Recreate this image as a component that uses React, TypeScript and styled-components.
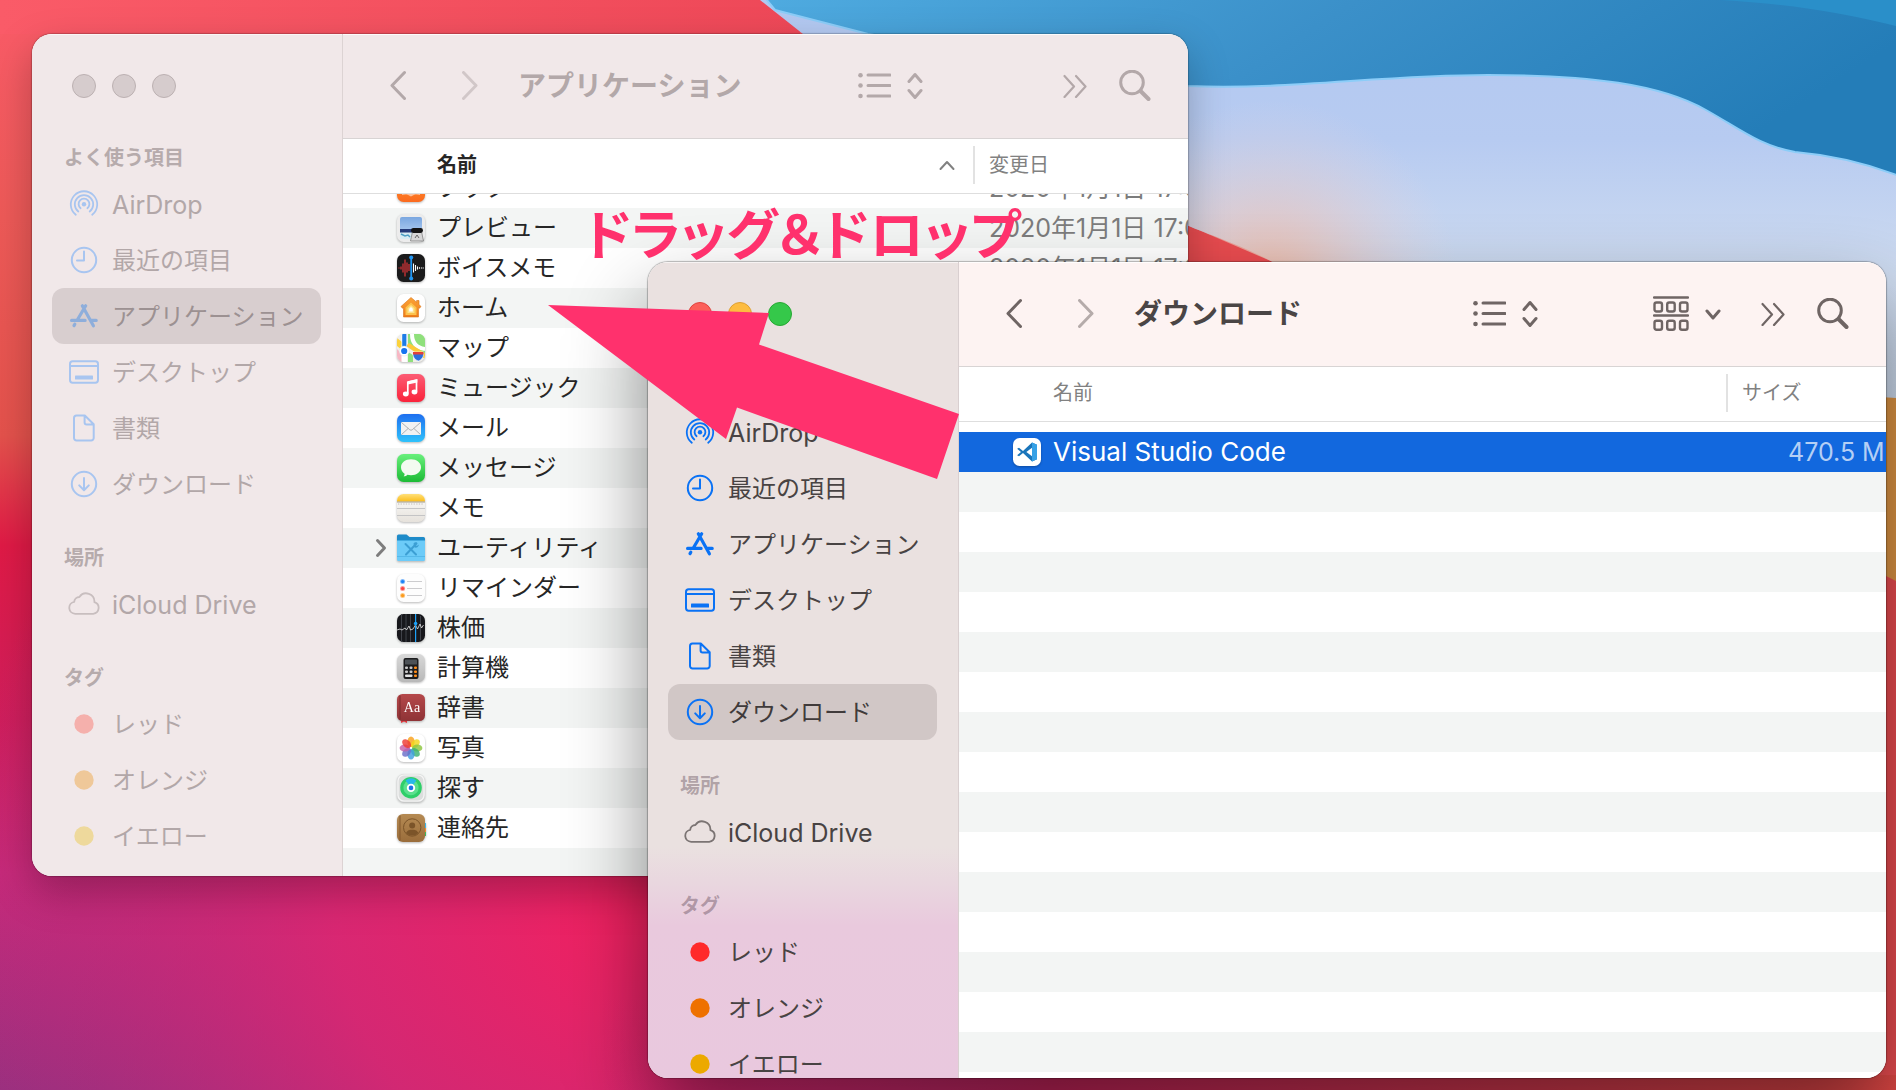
import React from "react";
import styled, { createGlobalStyle, css } from "styled-components";

const Global = createGlobalStyle`
  *, *::before, *::after { box-sizing: border-box; }
  html, body { margin: 0; padding: 0; }
  body {
    font-family: Inter, "Noto Sans CJK JP", sans-serif;
    font-size: 24px;
    line-height: 40px;
    background: #d81b60;
  }
  button {
    font: inherit;
    color: inherit;
    background: none;
    border: 0;
    padding: 0;
    margin: 0;
    cursor: pointer;
    display: block;
  }
  svg { display: block; }
`;

/* ---------- desktop ---------- */

const Desktop = styled.main`
  position: relative;
  height: 100vh;
  min-height: 900px;
  overflow: hidden;
`;

const WallpaperSvg = styled.svg`
  position: absolute;
  inset: 0;
  width: 100%;
  height: 100%;
`;

const windowBase = css`
  position: absolute;
  display: flex;
  overflow: hidden;
  border-radius: 20px;
  background: #ffffff;
`;

const BackWindow = styled.section`
  ${windowBase}
  left: 32px;
  top: 34px;
  width: 1156px;
  height: 842px;
  box-shadow: 0 0 1px 1px rgba(0, 0, 0, 0.2), 0 16px 40px rgba(0, 0, 0, 0.26);
`;

const FrontWindow = styled.section`
  ${windowBase}
  left: 648px;
  top: 262px;
  right: 10px;
  bottom: 12px;
  box-shadow: 0 0 1px 1px rgba(0, 0, 0, 0.26), 0 40px 80px rgba(0, 0, 0, 0.46);
`;

/* ---------- sidebar ---------- */

const Sidebar = styled.aside<{ $active: boolean }>`
  flex: 0 0 311px;
  overflow: hidden;
  padding-top: 40px;
  border-right: 1px solid ${(p) => (p.$active ? "#d9cfd0" : "#dcd3d3")};
  box-shadow: inset 0 1px 0 rgba(255, 255, 255, 0.6);
  color: ${(p) => (p.$active ? "#484343" : "#b2a7a8")};
  background: ${(p) =>
    p.$active
      ? "linear-gradient(180deg, #eae1e0 0, #eae1e0 584px, #e9d7df 620px, #e9c9dd 664px, #e9c8de 100%)"
      : "#f1e8e9"};
`;

const Lights = styled.div`
  display: flex;
  gap: 16px;
  padding-left: 40px;
  margin-bottom: 48px;
`;

const Light = styled.button<{ $fill: string; $edge: string }>`
  width: 24px;
  height: 24px;
  border-radius: 50%;
  background: ${(p) => p.$fill};
  border: 1px solid ${(p) => p.$edge};
`;

const Group = styled.nav`
  & + & { margin-top: 34px; }
`;

const GroupTitle = styled.h2<{ $active: boolean }>`
  margin: 0 0 6px;
  padding-left: 32px;
  font-size: 20px;
  line-height: 24px;
  font-weight: 700;
  color: ${(p) => (p.$active ? "rgba(70, 45, 60, 0.36)" : "#b6abac")};
`;

const Items = styled.ul`
  list-style: none;
  margin: 0;
  padding: 0 21px 0 20px;
`;

const Item = styled.button<{ $selected?: boolean; $active: boolean }>`
  display: flex;
  align-items: center;
  gap: 12px;
  width: 100%;
  height: 56px;
  padding-left: 16px;
  border-radius: 12px;
  text-align: left;
  white-space: nowrap;
  ${(p) =>
    p.$selected &&
    css`
      background: ${p.$active ? "#d1c7c6" : "#d8cecf"};
      color: ${p.$active ? "#403b3b" : "#9c9192"};
    `}
`;

const ItemLabel = styled.span<{ $latin?: boolean }>`
  padding-top: 2px;
  font-size: ${(p) => (p.$latin ? 25 : 24)}px;
  line-height: 40px;
`;

const ItemIcon = styled.span<{ $color: string }>`
  width: 32px;
  height: 32px;
  color: ${(p) => p.$color};
`;

/* ---------- content pane ---------- */

const Pane = styled.div`
  flex: 1;
  min-width: 0;
  display: flex;
  flex-direction: column;
`;

const Toolbar = styled.header<{ $active: boolean }>`
  flex: none;
  display: flex;
  align-items: center;
  height: 105px;
  padding: 0 37px 0 47px;
  border-bottom: 1px solid #d8d4d4;
  box-shadow: inset 0 1px 0 rgba(255, 255, 255, 0.8);
  background: ${(p) => (p.$active ? "#fdf3f2" : "#f1e8e9")};
  color: ${(p) => (p.$active ? "#6f6564" : "#b3a8a9")};
`;

const Title = styled.h1<{ $active: boolean }>`
  flex: 1;
  margin: 0;
  font-size: 28px;
  line-height: 40px;
  font-weight: 700;
  white-space: nowrap;
  color: ${(p) => (p.$active ? "#4a4545" : "#b3a8a9")};
`;

const Tool = styled.button<{ $before?: number; $faded?: boolean }>`
  flex: none;
  display: flex;
  align-items: center;
  gap: 16px;
  margin-left: ${(p) => p.$before ?? 0}px;
  opacity: ${(p) => (p.$faded ? 0.5 : 1)};
`;

const NavTools = styled.div`
  display: flex;
  gap: 56px;
  margin-right: 40px;
`;

const Table = styled.table<{ $side: number }>`
  flex: 1;
  min-height: 0;
  display: flex;
  flex-direction: column;
  tr {
    display: grid;
    grid-template-columns: minmax(0, 1fr) ${(p) => p.$side}px;
  }
`;

const Head = styled.thead`
  flex: none;
  display: block;
  border-bottom: 1px solid #dedede;
  background: #ffffff;
`;

const HeadCell = styled.th<{ $strong?: boolean }>`
  display: flex;
  align-items: center;
  justify-content: space-between;
  height: 38px;
  margin: 7px 0 9px;
  padding: 0 18px 0 94px;
  font-size: 20px;
  line-height: 36px;
  text-align: left;
  white-space: nowrap;
  font-weight: ${(p) => (p.$strong ? 700 : 400)};
  color: ${(p) => (p.$strong ? "#262626" : "#818181")};
  svg { color: #818181; }
  & + & {
    border-left: 2px solid #e2e2e2;
    padding-left: 14px;
  }
`;

const Body = styled.tbody<{ $shift: number }>`
  display: block;
  flex: 1;
  min-height: 0;
  overflow: hidden;
  background:
    linear-gradient(#ffffff, #ffffff) 0 0 / 100% 10px no-repeat,
    linear-gradient(#ffffff 50%, #f3f5f4 50%) 0 ${(p) => p.$shift}px / 100% 80px;
  & > tr:first-child { margin-top: ${(p) => p.$shift}px; }
`;

const Row = styled.tr<{ $selected?: boolean }>`
  height: 40px;
  color: ${(p) => (p.$selected ? "#ffffff" : "#262626")};
  background: ${(p) => (p.$selected ? "#1268de" : "transparent")};
`;

const NameCell = styled.td<{ $latin?: boolean }>`
  display: flex;
  align-items: center;
  height: 40px;
  padding: 0;
  font-size: ${(p) => (p.$latin ? 26 : 24)}px;
  white-space: nowrap;
`;

const Slot = styled.span`
  flex: 0 0 54px;
  display: flex;
  justify-content: flex-end;
  padding-right: 10px;
  color: #7d7d7d;
`;

const AppIcon = styled.span`
  flex: none;
  width: 28px;
  height: 28px;
  margin-right: 12px;
  filter: drop-shadow(0 1px 1px rgba(0, 0, 0, 0.28));
  svg { overflow: visible; }
`;

const SideCell = styled.td<{ $inset: number; $selected?: boolean }>`
  height: 40px;
  padding: 0 0 0 ${(p) => p.$inset}px;
  overflow: hidden;
  font-size: 25px;
  white-space: nowrap;
  color: ${(p) => (p.$selected ? "#b4cff5" : "#7c7c7c")};
`;

/* ---------- annotation ---------- */

const Caption = styled.p`
  position: absolute;
  left: 584px;
  top: 200px;
  margin: 0;
  font-family: "Noto Sans CJK JP", sans-serif;
  font-feature-settings: "palt";
  font-size: 54px;
  line-height: 64px;
  font-weight: 700;
  white-space: nowrap;
  color: #ff316d;
`;

const Arrow = styled.svg`
  position: absolute;
  left: 548px;
  top: 305px;
`;

/* ---------- small line icons ---------- */

const Glyph = ({ w, h, sw = 3, children }: { w: number; h: number; sw?: number; children: React.ReactNode }) => (
  <svg width={w} height={h} viewBox={`0 0 ${w} ${h}`} fill="none" stroke="currentColor" strokeWidth={sw} strokeLinecap="round" strokeLinejoin="round" aria-hidden="true">
    {children}
  </svg>
);

const BackGlyph = () => <Glyph w={16} h={32}><path d="M14.5 2.500 2 15.500l12.500 13" /></Glyph>;
const ForwardGlyph = () => <Glyph w={16} h={32}><path d="M1.500 2.500 14 15.500 1.500 28.500" /></Glyph>;
const ListGlyph = () => (
  <Glyph w={33} h={26}>
    <path d="M10 2h22M10 12.500h22M10 23h22" />
    <g fill="currentColor" stroke="none"><circle cx="2.500" cy="2.300" r="2.300" /><circle cx="2.500" cy="12.500" r="2.300" /><circle cx="2.500" cy="23" r="2.300" /></g>
  </Glyph>
);
const UpDownGlyph = () => <Glyph w={16} h={28}><path d="M2 9.500 8 2.500l6 7M2 18.500l6 7 6-7" /></Glyph>;
const GroupGlyph = () => (
  <Glyph w={36} h={36} sw={2.4}>
    <path d="M1 1.500h34M1 19.500h34" />
    <rect x="1.500" y="6.500" width="7.500" height="9" rx="2" /><rect x="14.200" y="6.500" width="7.500" height="9" rx="2" /><rect x="27" y="6.500" width="7.500" height="9" rx="2" />
    <rect x="1.500" y="24.800" width="7.500" height="9" rx="2" /><rect x="14.200" y="24.800" width="7.500" height="9" rx="2" /><rect x="27" y="24.800" width="7.500" height="9" rx="2" />
  </Glyph>
);
const DownGlyph = () => <Glyph w={16} h={14}><path d="M2 4l6 7 6-7" /></Glyph>;
const MoreGlyph = () => <Glyph w={24} h={24} sw={2.2}><path d="M1.500 2 11 12.500 1.500 23M13 2l9.500 10.500L13 23" /></Glyph>;
const SearchGlyph = () => <Glyph w={32} h={32}><circle cx="13" cy="12.500" r="11.300" strokeWidth="3" /><path d="M21.500 21 29.500 29" strokeWidth="4" /></Glyph>;
const SortGlyph = () => <Glyph w={16} h={12} sw={2}><path d="M1.500 10 8 3l6.500 7" /></Glyph>;
const DiscloseGlyph = () => <Glyph w={12} h={20}><path d="M2.500 2.500l7 7.500-7 7.500" /></Glyph>;

const SideGlyph = ({ sw = 2, children }: { sw?: number; children: React.ReactNode }) => <Glyph w={32} h={32} sw={sw}>{children}</Glyph>;

const AirDropGlyph = () => (
  <SideGlyph sw={1.8}>
    <path d="M7.800 26.800a13.200 13.200 0 1 1 16.400 0M10.300 23.500a9.200 9.200 0 1 1 11.400 0M12.600 20.200a5.400 5.400 0 1 1 6.800 0" />
    <circle cx="16" cy="16.200" r="2.200" fill="currentColor" stroke="none" />
  </SideGlyph>
);
const ClockGlyph = () => <SideGlyph><circle cx="16" cy="16" r="12.200" /><path d="M16 7.500v9H9" /></SideGlyph>;
const AppsGlyph = () => <SideGlyph sw={3.2}><path d="M14.300 5.800 25.400 25.800M17.700 5.800 9.300 20M3.600 20.400h13.500M22.600 20.400h5.600M6.800 24.200l-.8 1.400" /></SideGlyph>;
const DesktopGlyph = () => <SideGlyph><rect x="2" y="5.300" width="28" height="21.400" rx="2.600" /><path d="M2 10h28" /><rect x="7" y="19.600" width="18" height="4" rx=".6" fill="currentColor" stroke="none" /></SideGlyph>;
const DocGlyph = () => <SideGlyph><path d="M8.500 3.500h8.300l8.900 8.700v13.800a2.500 2.500 0 0 1-2.500 2.500H8.500A2.500 2.500 0 0 1 6 26V6a2.500 2.500 0 0 1 2.500-2.500ZM16.600 3.800v6.600a2 2 0 0 0 2 2h6.800" /></SideGlyph>;
const DownloadGlyph = () => <SideGlyph><circle cx="16" cy="16" r="12.200" /><path d="M16 10v12M11.200 17.400 16 22.200l4.800-4.800" /></SideGlyph>;
const CloudGlyph = () => <SideGlyph sw={1.8}><path d="M7.200 25.800a6 6 0 0 1-1-11.900 5.300 5.300 0 0 1 5.200-4.900 8.200 8.200 0 0 1 15 5.100 6 6 0 0 1-1.200 11.700Z" /></SideGlyph>;
const TagDot = () => <SideGlyph><circle cx="16" cy="16" r="9.700" fill="currentColor" stroke="none" /></SideGlyph>;

/* ---------- application icons ---------- */

const Art = ({ children }: { children: React.ReactNode }) => <svg width="28" height="28" viewBox="0 0 28 28" aria-hidden="true">{children}</svg>;
const Tile = ({ fill }: { fill: string }) => <rect width="28" height="28" rx="6.500" fill={fill} />;

const DefsSvg = styled.svg`
  position: absolute;
`;

const ArtDefs = () => (
  <DefsSvg width="0" height="0" aria-hidden="true">
    <defs>
      <linearGradient id="gBooks" x2="0" y2="1"><stop stopColor="#ff9a2e" /><stop offset="1" stopColor="#fb6a1f" /></linearGradient>
      <linearGradient id="gSky" x2="0" y2="1"><stop stopColor="#7aa7e0" /><stop offset="1" stopColor="#b9d4f4" /></linearGradient>
      <linearGradient id="gMusic" x2="0" y2="1"><stop stopColor="#fc5c74" /><stop offset="1" stopColor="#fa233b" /></linearGradient>
      <linearGradient id="gMail" x2="0" y2="1"><stop stopColor="#1f6ff0" /><stop offset="1" stopColor="#2fc2fb" /></linearGradient>
      <linearGradient id="gMsg" x2="0" y2="1"><stop stopColor="#68f07c" /><stop offset="1" stopColor="#1cbb35" /></linearGradient>
      <linearGradient id="gPaper" x2="0" y2="1"><stop stopColor="#fdfdfc" /><stop offset="1" stopColor="#e6e2dc" /></linearGradient>
      <linearGradient id="gNote" x2="0" y2="1"><stop stopColor="#ffe07a" /><stop offset="1" stopColor="#fbbd1b" /></linearGradient>
      <linearGradient id="gHome" x2="0" y2="1"><stop stopColor="#fba337" /><stop offset="1" stopColor="#ef7d18" /></linearGradient>
      <linearGradient id="gCalc" x2="0" y2="1"><stop stopColor="#d9d9d9" /><stop offset="1" stopColor="#b8b8b8" /></linearGradient>
      <linearGradient id="gDict" x2="0" y2="1"><stop stopColor="#b5484a" /><stop offset="1" stopColor="#8e3336" /></linearGradient>
      <linearGradient id="gCont" x2="0" y2="1"><stop stopColor="#b58a53" /><stop offset="1" stopColor="#9a6d3b" /></linearGradient>
      <clipPath id="tileClip"><rect width="28" height="28" rx="6.500" /></clipPath>
    </defs>
  </DefsSvg>
);

const BooksArt = () => <Art><Tile fill="url(#gBooks)" /><path d="M5 9c3-1 6-1 9 1.500C17 8 20 8 23 9v12c-3-1-6-.8-9 1.500C11 20.200 8 20 5 21Z" fill="#fff" opacity=".55" /></Art>;
const PreviewArt = () => (
  <Art>
    <Tile fill="#ececec" />
    <rect x="3" y="3" width="22" height="20" rx="2" fill="url(#gSky)" />
    <path d="M3 15h22v4H3Z" fill="#243a78" /><path d="M3 18.500h22V23a2 2 0 0 1-2 2H5a2 2 0 0 1-2-2Z" fill="#d8ecf3" />
    <path d="m4 20 4 2 3-1 2 2" stroke="#4f9fc4" strokeWidth="1.500" fill="none" />
    <path d="M15.500 17.500h9l2 9.500H13.500Z" fill="#d6d6d6" stroke="#777" strokeWidth=".7" />
    <rect x="14" y="14" width="12" height="5" rx="2.400" fill="#141414" /><path d="m18 24 2-3 2 3" stroke="#666" fill="none" />
  </Art>
);
const VoiceArt = () => (
  <Art>
    <Tile fill="#1b1b1c" />
    <path d="M2 13.500v1M4 12.500v3M6 9.500v9M8 5.500v17M10 8.500v10M12 10v7" stroke="#f0383c" strokeWidth="1.100" />
    <path d="M16.500 9.500v9M18.500 11v6M20.500 12.500v3M22.500 13.300v1.400M24.500 13.500v1M26.200 13.500v1" stroke="#fff" strokeWidth="1.100" />
    <path d="M14.200 3v22" stroke="#2196f3" strokeWidth="1.800" /><circle cx="14.200" cy="3.600" r="2" fill="#2196f3" /><circle cx="14.200" cy="24.400" r="2" fill="#2196f3" />
  </Art>
);
const HomeArt = () => (
  <Art>
    <Tile fill="#fff" />
    <path d="M14 3.500 4 12.500l1.500 1.800L6.500 13.500V23h15V13.500l1 .8 1.500-1.800-2-1.900V6.500h-2.400v1.700Z" fill="url(#gHome)" stroke="#d8741a" strokeWidth=".6" />
    <path d="m14 8.500-5.500 5V21h11v-7.500Z" fill="#fcc24d" /><path d="m14 11-3.500 3.200V19h7v-4.800Z" fill="#fde28a" /><path d="m14 13-1.800 1.800v2.700h3.600v-2.700Z" fill="#fff" />
  </Art>
);
const MapsArt = () => (
  <Art>
    <g clipPath="url(#tileClip)">
      <rect width="28" height="28" fill="#f1efe9" />
      <path d="M11 0h17v20L11 12Z" fill="#8fe07c" /><path d="M0 15l5 5v8H0Z" fill="#f7b7c4" /><path d="M0 4l5 4v8l-5-4Z" fill="#fbd23c" />
      <path d="M15 0c0 9 5 14 13 15" stroke="#fff" strokeWidth="4" fill="none" /><path d="M21 0c0 5 3 8 7 9V0Z" fill="#8fe07c" />
      <path d="m9 12 19 13v-6L12 9Z" fill="#fcc93a" />
      <path d="M4.500 0h5.500v28H4.500Z" fill="#fff" /><path d="M5.200 0h4.200v15H5.200Z" fill="#1e7ce6" /><path d="M11 18v10h5V21Z" fill="#8fe07c" />
      <path d="M16 18h10.500c.5 5-1.500 7.500-5.200 9-3.800-1.500-5.800-4-5.300-9Z" fill="#2c6fdc" stroke="#fff" strokeWidth=".6" /><path d="M16 18h10.500v2.600H16Z" fill="#e2403a" />
    </g>
    <circle cx="7.200" cy="17" r="5" fill="#fff" stroke="#cfd6e0" strokeWidth=".4" /><circle cx="7.200" cy="17" r="3.100" fill="#1674f0" />
  </Art>
);
const MusicArt = () => (
  <Art>
    <Tile fill="url(#gMusic)" />
    <path d="M10.800 19.500V8.200l8.700-2v11.200" fill="none" stroke="#fff" strokeWidth="1.700" /><path d="M10.800 7.200 20.300 5v3.500l-9.500 2.100Z" fill="#fff" />
    <ellipse cx="8.800" cy="20" rx="2.900" ry="2.400" fill="#fff" /><ellipse cx="17.500" cy="18" rx="2.900" ry="2.400" fill="#fff" />
  </Art>
);
const MailArt = () => (
  <Art>
    <Tile fill="url(#gMail)" /><rect x="4" y="8" width="20" height="13" rx="1.200" fill="#f2f2f2" />
    <path d="m4.500 8.500 8.300 7.300a2 2 0 0 0 2.400 0l8.300-7.300M4.500 20.600l6.700-6.200M23.500 20.600l-6.700-6.200" fill="none" stroke="#a4a8ac" strokeWidth=".9" />
  </Art>
);
const MessagesArt = () => <Art><Tile fill="url(#gMsg)" /><path d="M14 5.300c5.600 0 10 3.500 10 8s-4.400 8-10 8c-1.300 0-2.500-.2-3.600-.5-1 1-2.200 1.500-3.800 1.500.7-.8 1-1.500 1-2.600C5.400 18.200 4 16 4 13.300c0-4.500 4.400-8 10-8Z" fill="#f3fbf1" /></Art>;
const NotesArt = () => (
  <Art>
    <Tile fill="url(#gPaper)" /><g clipPath="url(#tileClip)"><rect width="28" height="7.500" fill="url(#gNote)" /></g>
    <path d="M0 8h28" stroke="#8a8474" strokeWidth=".8" /><path d="M1 10h26" stroke="#bcb8b0" strokeWidth=".9" strokeDasharray="1.300 1.300" /><path d="M0 14.500h28M0 21.500h28" stroke="#c0c0c2" strokeWidth=".9" />
  </Art>
);
const FolderArt = () => (
  <Art>
    <path d="M0 2a1.500 1.500 0 0 1 1.500-1.500h8L12.500 3h14A1.500 1.500 0 0 1 28 4.500V25H0Z" fill="#1d8bc9" />
    <path d="M0 6.500h28v19a1.500 1.500 0 0 1-1.500 1.500h-25A1.500 1.500 0 0 1 0 25.500Z" fill="#6ccbf8" /><path d="M0 22.500h28" stroke="#4fb2e4" strokeWidth=".8" />
    <path d="m8.500 10 10.500 10.500M19.500 9.500 9 20.500" stroke="#3c9fd4" strokeWidth="2" strokeLinecap="round" /><path d="M16.500 9.500a3 3 0 0 1 3.500-1l-1.800 2 1.600 1.600 2-1.600a3 3 0 0 1-4.500 2.800" fill="#3c9fd4" />
  </Art>
);
const RemindersArt = () => (
  <Art>
    <Tile fill="#fdfdfd" />
    <path d="M10 7.500h15M10 14.500h15M10 21.500h15" stroke="#c6c6c8" strokeWidth=".9" />
    {([[7.500, "#1a82f7"], [14.500, "#fb4340"], [21.500, "#fb9a1c"]] as [number, string][]).map(([y, c]) => (
      <g key={c}><circle cx="5.600" cy={y} r="2.500" fill={c} opacity=".55" /><circle cx="5.600" cy={y} r="1.600" fill={c} /></g>
    ))}
  </Art>
);
const StocksArt = () => (
  <Art>
    <Tile fill="#17181c" /><path d="M4.500 0v28M9 0v28M13.500 0v28M23.500 2v24" stroke="#44474f" strokeWidth=".9" />
    <path d="M0 16l3-1 2 1 3-2 1.500 2L12 12l1.500 4 2.500-1 2.500-4 2 4 2.500-5 1.500 4 2-3" fill="none" stroke="#e8e8e8" strokeWidth=".8" />
    <path d="M18.600 0v28" stroke="#1da1f7" strokeWidth="1.200" /><circle cx="18.600" cy="9.500" r="1.800" fill="#1da1f7" />
  </Art>
);
const CalcArt = () => (
  <Art>
    <Tile fill="url(#gCalc)" /><rect x="6.500" y="4" width="15" height="21" rx="2" fill="#1c1c1e" /><rect x="8" y="5.500" width="12" height="5" rx=".6" fill="#4d5257" />
    {[12.500, 16.500].map((y) => <g key={y}><rect x="8" y={y} width="3" height="2.600" rx="1" fill="#c9c9c9" /><rect x="12.500" y={y} width="3" height="2.600" rx="1" fill="#c9c9c9" /><rect x="17" y={y} width="3" height="2.600" rx="1" fill="#ff8d1a" /></g>)}
    <rect x="8" y="20.500" width="7.500" height="2.600" rx="1" fill="#e2e2e2" /><rect x="17" y="20.500" width="3" height="2.600" rx="1" fill="#ff8d1a" />
  </Art>
);
const DictArt = () => (
  <Art>
    <path d="M4 25h6v4l-3-1.500L4 29Z" fill="#e2343a" /><rect width="28" height="27" rx="5.500" fill="url(#gDict)" /><path d="M3 1.500v24" stroke="#7a2a2d" strokeWidth="1" />
    <text x="15" y="18" textAnchor="middle" fontFamily="Liberation Serif, serif" fontSize="14" fill="#fff">Aa</text>
  </Art>
);
const petals = ["#f9a01b", "#f2d51c", "#8cc63e", "#3bb273", "#3f9fe0", "#6a6fc9", "#c45fa9", "#ee3b33"];
const PhotosArt = () => (
  <Art><Tile fill="#fff" />{petals.map((c, i) => <ellipse key={c} cx="14" cy="7.800" rx="3.600" ry="5.200" fill={c} opacity=".82" transform={`rotate(${i * 45} 14 14)`} />)}</Art>
);
const FindArt = () => (
  <Art>
    <Tile fill="#dcdedd" /><rect x="1" y="1" width="26" height="26" rx="6" fill="none" stroke="#f5f5f5" strokeWidth="1.200" />
    <circle cx="14" cy="13.700" r="10.800" fill="#2fcf69" /><circle cx="14" cy="13.700" r="7.600" fill="#5be08e" /><path d="m14 13.700-5.400-7.300a9 9 0 0 1 10.800 0Z" fill="#27b9e8" />
    <circle cx="14" cy="13.900" r="4.200" fill="#fff" /><circle cx="14" cy="13.900" r="2.300" fill="#1a73e8" />
  </Art>
);
const ContactsArt = () => (
  <Art>
    <path d="M26 9h3v5h-3Z" fill="#3db6e8" /><path d="M26 14h3v4h-3Z" fill="#f08c2c" /><path d="M26 18h3v4h-3Z" fill="#3fb75b" />
    <rect width="28" height="28" rx="6" fill="url(#gCont)" /><path d="M3 1.500v25" stroke="#83592d" />
    <circle cx="15.200" cy="13.500" r="8.700" fill="none" stroke="#7b5429" strokeWidth="1" /><circle cx="15.200" cy="11.500" r="3" fill="#7b5429" /><path d="M9 19c1.500-3 4-3.200 6.200-3.200s4.700.2 6.200 3.200a8.700 8.700 0 0 1-12.400 0Z" fill="#7b5429" />
  </Art>
);
const CodeArt = () => (
  <Art>
    <Tile fill="#fff" />
    <path d="m19 4.500 5 2.300v14.400l-5 2.300-9-8.400-4 3.200-1.900-1L8 14l-3.900-3.300L6 9.700l4 3.200Z" fill="#1a75ba" />
    <path d="m19 4.500 5 2.300v14.400l-5 2.300Z" fill="#36a1e6" /><path d="M19 9.800 13.400 14l5.600 4.200Z" fill="#fff" />
  </Art>
);

/* ---------- wallpaper ---------- */

const Wallpaper = () => (
  <WallpaperSvg viewBox="0 0 1896 1090" preserveAspectRatio="none" aria-hidden="true">
    <defs>
      <linearGradient id="wBase" x2="0" y2="1">
        <stop stopColor="#fa5b68" /><stop offset=".2" stopColor="#ee5a58" /><stop offset=".4" stopColor="#e4524c" />
        <stop offset=".5" stopColor="#e01a46" /><stop offset=".66" stopColor="#d01e5c" /><stop offset=".8" stopColor="#c62a7a" /><stop offset="1" stopColor="#9a307f" />
      </linearGradient>
      <radialGradient id="wGlow" gradientUnits="userSpaceOnUse" cx="640" cy="900" r="680">
        <stop stopColor="#f2215f" /><stop offset=".45" stopColor="#e02670" stopOpacity=".8" /><stop offset="1" stopColor="#c0297a" stopOpacity="0" />
      </radialGradient>
      <linearGradient id="wBottom"><stop stopColor="#c52c78" stopOpacity="0" /><stop offset=".35" stopColor="#c3245a" /><stop offset="1" stopColor="#e04845" /></linearGradient>
      <linearGradient id="wTop"><stop stopColor="#fa5b68" /><stop offset="1" stopColor="#ee4858" /></linearGradient>
      <linearGradient id="wBlue" x2="1" y2=".25"><stop stopColor="#4fabe0" /><stop offset=".5" stopColor="#3b90c9" /><stop offset="1" stopColor="#247db8" /></linearGradient>
      <linearGradient id="wPale" x2="0" y2="1"><stop stopColor="#b2c8f1" /><stop offset=".25" stopColor="#b7cbf1" /><stop offset=".5" stopColor="#cfdcf0" /><stop offset="1" stopColor="#c6d4e4" /></linearGradient>
      <radialGradient id="wPeach" gradientUnits="userSpaceOnUse" cx="1270" cy="290" r="190"><stop stopColor="#f0b8a2" /><stop offset="1" stopColor="#e6d6de" stopOpacity="0" /></radialGradient>
    </defs>
    <rect width="1896" height="1090" fill="url(#wBase)" />
    <path d="M0 500h1896v590H0Z" fill="url(#wGlow)" />
    <path d="M600 1000h1296v90H600Z" fill="url(#wBottom)" />
    <path d="M0 0h800v34H0Z" fill="url(#wTop)" />
    <path d="M1180 215h716v860h-716Z" fill="#ea4c50" />
    <path d="M760 0h1136v560H1660C1480 420 1380 310 1273 262 1230 240 1200 232 1180 222L803 34Z" fill="url(#wPale)" />
    <path d="M1100 80h500v182h-327l-93-40Z" fill="url(#wPeach)" />
    <path d="M1880 397l16 1v183l-16-8Z" fill="#dd9444" />
    <path d="M762-6H1902V177C1866 163 1830 155 1795 152 1760 146 1740 129 1706 110 1660 84 1590 75 1488 75 1380 75 1290 90 1188 86L868 34 775 10Z" fill="url(#wBlue)" stroke="#8ccdf8" strokeWidth="2" />
    <path d="M1720 0c70 4 120 12 176 26V0Z" fill="#2a8fc9" />
  </WallpaperSvg>
);

/* ---------- data ---------- */

type Entry = { label: string; icon: React.ReactNode; latin?: boolean; color?: string; faded?: string };

const groups: { title: string; items: Entry[] }[] = [
  {
    title: "よく使う項目",
    items: [
      { label: "AirDrop", icon: <AirDropGlyph />, latin: true },
      { label: "最近の項目", icon: <ClockGlyph /> },
      { label: "アプリケーション", icon: <AppsGlyph /> },
      { label: "デスクトップ", icon: <DesktopGlyph /> },
      { label: "書類", icon: <DocGlyph /> },
      { label: "ダウンロード", icon: <DownloadGlyph /> },
    ],
  },
  { title: "場所", items: [{ label: "iCloud Drive", icon: <CloudGlyph />, latin: true, color: "#7b7473", faded: "#c8bebf" }] },
  {
    title: "タグ",
    items: [
      { label: "レッド", icon: <TagDot />, color: "#ff2a2a", faded: "#f5b0ac" },
      { label: "オレンジ", icon: <TagDot />, color: "#ee7100", faded: "#efc899" },
      { label: "イエロー", icon: <TagDot />, color: "#eca900", faded: "#eed99c" },
    ],
  },
];

const apps: { name: string; icon: React.ReactNode; folder?: boolean }[] = [
  { name: "ブック", icon: <BooksArt /> },
  { name: "プレビュー", icon: <PreviewArt /> },
  { name: "ボイスメモ", icon: <VoiceArt /> },
  { name: "ホーム", icon: <HomeArt /> },
  { name: "マップ", icon: <MapsArt /> },
  { name: "ミュージック", icon: <MusicArt /> },
  { name: "メール", icon: <MailArt /> },
  { name: "メッセージ", icon: <MessagesArt /> },
  { name: "メモ", icon: <NotesArt /> },
  { name: "ユーティリティ", icon: <FolderArt />, folder: true },
  { name: "リマインダー", icon: <RemindersArt /> },
  { name: "株価", icon: <StocksArt /> },
  { name: "計算機", icon: <CalcArt /> },
  { name: "辞書", icon: <DictArt /> },
  { name: "写真", icon: <PhotosArt /> },
  { name: "探す", icon: <FindArt /> },
  { name: "連絡先", icon: <ContactsArt /> },
];

const activeLights = [["#fc5f5a", "#e0443e"], ["#fdbc40", "#dea033"], ["#35c84a", "#27a833"]];
const idleLights = [["#d6cccd", "#bcb1b2"], ["#d6cccd", "#bcb1b2"], ["#d6cccd", "#bcb1b2"]];
const lightNames = ["閉じる", "しまう", "フルスクリーン"];

const FinderSidebar = ({ active, selected }: { active: boolean; selected: string }) => (
  <Sidebar $active={active}>
    <Lights>
      {(active ? activeLights : idleLights).map(([fill, edge], i) => (
        <Light key={lightNames[i]} $fill={fill} $edge={edge} aria-label={lightNames[i]} />
      ))}
    </Lights>
    {groups.map((g) => (
      <Group key={g.title} aria-label={g.title}>
        <GroupTitle $active={active}>{g.title}</GroupTitle>
        <Items>
          {g.items.map((it) => {
            const on = it.label === selected;
            const color = active ? it.color ?? "#0a72f5" : it.faded ?? (on ? "#8eaedb" : "#a8c5f0");
            return (
              <li key={it.label}>
                <Item $active={active} $selected={on}>
                  <ItemIcon $color={color}>{it.icon}</ItemIcon>
                  <ItemLabel $latin={it.latin}>{it.label}</ItemLabel>
                </Item>
              </li>
            );
          })}
        </Items>
      </Group>
    ))}
  </Sidebar>
);

const FinderToolbar = ({ active, title, grouping }: { active: boolean; title: string; grouping?: boolean }) => (
  <Toolbar $active={active}>
    <NavTools>
      <Tool aria-label="戻る"><BackGlyph /></Tool>
      <Tool aria-label="進む" $faded><ForwardGlyph /></Tool>
    </NavTools>
    <Title $active={active}>{title}</Title>
    <Tool aria-label="リスト表示"><ListGlyph /><UpDownGlyph /></Tool>
    {grouping && <Tool aria-label="グループ" $before={115}><GroupGlyph /><DownGlyph /></Tool>}
    <Tool aria-label="その他" $before={grouping ? 40 : 140}><MoreGlyph /></Tool>
    <Tool aria-label="検索" $before={32}><SearchGlyph /></Tool>
  </Toolbar>
);

export default function App() {
  return (
    <>
      <Global />
      <ArtDefs />
      <Desktop>
        <Wallpaper />
        <BackWindow aria-label="アプリケーション">
          <FinderSidebar active={false} selected="アプリケーション" />
          <Pane>
            <FinderToolbar active={false} title="アプリケーション" />
            <Table $side={215} cellSpacing={0}>
              <Head>
                <tr>
                  <HeadCell $strong scope="col">名前<SortGlyph /></HeadCell>
                  <HeadCell scope="col">変更日</HeadCell>
                </tr>
              </Head>
              <Body $shift={-26}>
                {apps.map((a) => (
                  <Row key={a.name}>
                    <NameCell>
                      <Slot>{a.folder && <DiscloseGlyph />}</Slot>
                      <AppIcon>{a.icon}</AppIcon>
                      {a.name}
                    </NameCell>
                    <SideCell $inset={16}>2020年1月1日 17:00</SideCell>
                  </Row>
                ))}
              </Body>
            </Table>
          </Pane>
        </BackWindow>
        <FrontWindow aria-label="ダウンロード">
          <FinderSidebar active selected="ダウンロード" />
          <Pane>
            <FinderToolbar active title="ダウンロード" grouping />
            <Table $side={160} cellSpacing={0}>
              <Head>
                <tr>
                  <HeadCell scope="col">名前</HeadCell>
                  <HeadCell scope="col">サイズ</HeadCell>
                </tr>
              </Head>
              <Body $shift={10}>
                <Row $selected>
                  <NameCell $latin>
                    <Slot />
                    <AppIcon><CodeArt /></AppIcon>
                    Visual Studio Code
                  </NameCell>
                  <SideCell $inset={62} $selected>470.5 MB</SideCell>
                </Row>
              </Body>
            </Table>
          </Pane>
        </FrontWindow>
        <Caption>ドラッグ＆ドロップ</Caption>
        <Arrow width="412" height="175" viewBox="0 0 412 175" aria-hidden="true">
          <path d="M0 0 221 8 211 39.500 411 109 389 174 189 102.500 178 134Z" fill="#ff316d" />
        </Arrow>
      </Desktop>
    </>
  );
}
